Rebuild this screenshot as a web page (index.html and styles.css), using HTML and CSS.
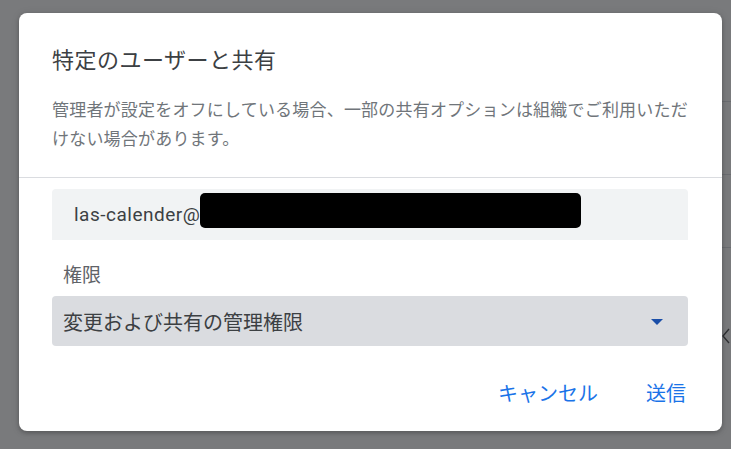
FILE: index.html
```html
<!DOCTYPE html>
<html lang="ja">
<head>
<meta charset="utf-8">
<title>特定のユーザーと共有</title>
<link rel="stylesheet" href="styles.css">
</head>
<body>
<div class="app">
  <div class="app-side">
    <div class="row r1"></div>
    <div class="row r2"></div>
    <div class="row r3"></div>
    <div class="chev">
      <svg width="10" height="18" viewBox="0 0 10 18"><path d="M8 2 L2 9 L8 16" fill="none" stroke="#47484a" stroke-width="1.4"/></svg>
    </div>
  </div>
</div>
<div class="scrim"></div>
<div class="dialog" role="dialog">
  <div class="head">
    <h1 class="title">特定のユーザーと共有</h1>
    <p class="desc">管理者が設定をオフにしている場合、一部の共有オプションは組織でご利用いただけない場合があります。</p>
  </div>
  <div class="body">
    <div class="email-field">
      <span class="email">las-calender@</span><span class="redact"></span>
    </div>
    <div class="label">権限</div>
    <div class="select">
      <span class="select-text">変更および共有の管理権限</span>
      <svg class="arrow" width="12" height="6" viewBox="0 0 12 6"><path d="M0 0 H12 L6 6 Z" fill="#1a4ea8"/></svg>
    </div>
  </div>
  <div class="actions">
    <button class="btn">キャンセル</button>
    <button class="btn">送信</button>
  </div>
</div>
</body>
</html>
```
FILE: styles.css
```css
html, body {
  margin: 0;
  padding: 0;
}
body {
  width: 731px;
  height: 449px;
  overflow: hidden;
  position: relative;
  background: #ffffff;
  font-family: Roboto, "Noto Sans CJK JP", sans-serif;
}
.app {
  position: absolute;
  inset: 0;
  display: flex;
  justify-content: flex-end;
}
.app-side {
  width: 40px;
  display: flex;
  flex-direction: column;
}
.row {
  border-bottom: 1px solid #dadce0;
}
.r1 { height: 101px; }
.r2 { height: 72px; }
.r3 { height: 72px; }
.chev {
  margin-top: 79px;
  padding-left: 30px;
  height: 18px;
}
.scrim {
  position: absolute;
  inset: 0;
  background: rgba(32, 33, 36, 0.6);
}
.dialog {
  position: absolute;
  left: 19px;
  top: 13px;
  width: 703px;
  background: #fff;
  border-radius: 8px;
  box-shadow: 0 2px 4px rgba(0, 0, 0, 0.2), 0 1px 8px rgba(0, 0, 0, 0.12);
  display: flex;
  flex-direction: column;
}
.head {
  padding: 33px 20px 23px 33px;
  border-bottom: 1px solid #dadce0;
}
.title {
  margin: 0;
  font-size: 22px;
  letter-spacing: 0.5px;
  line-height: 30px;
  font-weight: 400;
  color: #3c4043;
}
.desc {
  margin: 20px 0 0;
  font-size: 17px;
  letter-spacing: 0.2px;
  line-height: 29px;
  color: #70757a;
}
.body {
  padding: 11px 34px 0 33px;
  display: flex;
  flex-direction: column;
}
.email-field {
  height: 51px;
  background: #f1f3f4;
  border-radius: 4px 4px 0 0;
  display: flex;
  align-items: center;
  padding-left: 22px;
}
.email {
  font-size: 19px;
  letter-spacing: 0.5px;
  color: #3c4043;
}
.redact {
  width: 381px;
  height: 35px;
  background: #000;
  border-radius: 5px;
  margin-bottom: 8px;
}
.label {
  margin-top: 24px;
  padding-left: 11px;
  font-size: 19px;
  line-height: 24px;
  color: #5f6368;
}
.select {
  margin-top: 8px;
  height: 50px;
  background: #dadce0;
  border-radius: 4px;
  display: flex;
  align-items: center;
  justify-content: space-between;
  padding: 0 25px 0 11px;
}
.select-text {
  font-size: 20px;
  color: #3c4043;
}
.arrow {
  margin-top: 2px;
}
.actions {
  display: flex;
  justify-content: flex-end;
  gap: 48px;
  padding: 30px 36px 19px 0;
}
.btn {
  border: 0;
  background: none;
  padding: 0;
  font-family: Roboto, "Noto Sans CJK JP", sans-serif;
  font-size: 20px;
  line-height: 36px;
  color: #1a73e8;
  cursor: pointer;
}
```
